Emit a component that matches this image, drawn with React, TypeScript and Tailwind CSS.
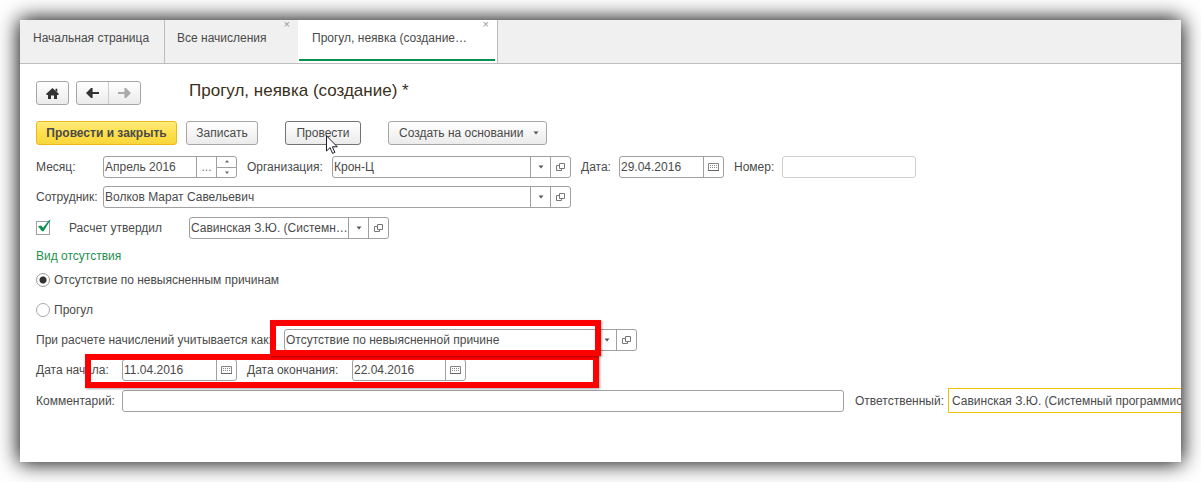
import type { ReactNode } from "react";

interface FieldProps {
  id: string;
  label: string;
  value?: string;
  className?: string;
  children?: ReactNode;
}

function Field({ id, label, value = "", className = "", children }: FieldProps) {
  return (
    <div className={`flex h-[22px] shrink-0 rounded-[3px] border bg-white ${className}`}>
      <input
        id={id}
        aria-label={label}
        defaultValue={value}
        className="min-w-0 flex-1 rounded-[3px] bg-transparent pl-px outline-none"
      />
      {children}
    </div>
  );
}

function FieldButton({ label, children }: { label: string; children: ReactNode }) {
  return (
    <button
      type="button"
      aria-label={label}
      className="flex w-5 shrink-0 items-center justify-center border-l border-[#a0a0a0] text-[#707070]"
    >
      {children}
    </button>
  );
}

function Caret() {
  return (
    <svg width="6" height="4" viewBox="0 0 6 4" fill="#555">
      <path d="M0.5 0.5h5L3 3.5z" />
    </svg>
  );
}

function OpenButton() {
  return (
    <FieldButton label="Открыть">
      <svg width="9" height="8" viewBox="0 0 9 8" fill="none" stroke="#777">
        <path d="M0.5 2.5h5v5h-5z" />
        <path d="M3.5 0.5h5v5h-5z" fill="#fff" />
      </svg>
    </FieldButton>
  );
}

function SelectButtons() {
  return (
    <>
      <FieldButton label="Выбрать из списка">
        <Caret />
      </FieldButton>
      <OpenButton />
    </>
  );
}

function CalendarButton() {
  return (
    <FieldButton label="Календарь">
      <svg width="11" height="8" viewBox="0 0 11 8" fill="none" stroke="#858585">
        <path d="M0.5 0.5h10v7h-10z" />
        <path d="M2 2.5h7M2 4.5h7" strokeDasharray="1 1" />
        <path d="M0 7.5h11" stroke="#666" />
      </svg>
    </FieldButton>
  );
}

function Arrow({ flip, color }: { flip?: boolean; color: string }) {
  return (
    <svg width="13" height="10" viewBox="0 0 13 10" fill={color} className={flip ? "rotate-180" : ""}>
      <path d="M0 5 5 0h1.6v3.9H13v2.2H6.6V10H5z" />
    </svg>
  );
}

function Cursor() {
  return (
    <svg
      width="13"
      height="20"
      viewBox="0 0 13 20"
      className="pointer-events-none absolute left-10 top-3.5 z-10"
    >
      <path d="M1.5 0.8V16l3.6-3.4 2.4 5.8 2.4-1-2.5-5.6h4.9z" fill="#fff" stroke="#1c1c28" />
    </svg>
  );
}

const plainButton =
  "h-6 rounded-[3px] border border-[#a6a6a6] bg-linear-to-b from-white to-[#ebebeb]";
const frame =
  "pointer-events-none absolute border-6 border-[#ff0000] shadow-[1px_1px_2px_rgba(0,0,0,0.35)]";

export default function App() {
  return (
    <div className="overflow-hidden bg-white p-5 font-['Liberation_Sans',Arial,sans-serif] text-xs text-[#4a4a4a]">
      <div className="bg-white shadow-[0_0_20px_1px_#000]">
        <nav className="flex h-11 border-b border-[#bdbdbd] bg-[#f0f0f0] leading-9">
          <a href="#home" className="w-[145px] border-r border-[#bdbdbd] pl-[13px]">
            Начальная страница
          </a>
          <div className="relative w-[133px] pl-3">
            <a href="#accruals">Все начисления</a>
            <button type="button" aria-label="Закрыть" className="absolute right-2 top-0 text-[11px] leading-2 text-[#999]">
              ×
            </button>
          </div>
          <div className="relative w-[200px] border-r border-[#bdbdbd] bg-white pl-3.5">
            <a href="#absence">Прогул, неявка (создание…</a>
            <button type="button" aria-label="Закрыть" className="absolute right-2 top-0 text-[11px] leading-2 text-[#999]">
              ×
            </button>
            <span className="absolute left-px right-0.5 bottom-0.5 h-0.5 bg-[#079150]" />
          </div>
        </nav>

        <form className="overflow-hidden pb-[49px] pl-4 pt-[17px]" onSubmit={(e) => e.preventDefault()}>
          <div className="flex h-6 items-center">
            <button type="button" aria-label="Домой" className={`${plainButton} flex w-[33px] items-center justify-center`}>
              <svg width="13" height="11" viewBox="0 0 13 11" fill="#333">
                <path d="M6.5 0 13 6 12.2 7H11v4H8V7.5H5V11H2V7H0.8L0 6zM9.5 0.8h1.8V4L9.5 2.4z" />
              </svg>
            </button>
            <div className={`${plainButton} ml-[7px] flex w-[65px]`}>
              <button type="button" aria-label="Назад" className="flex flex-1 items-center justify-center border-r border-[#ccc]">
                <Arrow color="#333" />
              </button>
              <button type="button" aria-label="Вперед" className="flex flex-1 items-center justify-center">
                <Arrow flip color="#aaa" />
              </button>
            </div>
            <h1 className="ml-12 pb-1 text-[17px] leading-5 text-[#3a3020]">Прогул, неявка (создание) *</h1>
          </div>

          <div className="mt-4 flex">
            <button
              type="submit"
              className="h-6 w-[141px] rounded-[3px] border border-[#f0b814] bg-linear-to-b from-[#ffeb7c] via-[#ffe04b] to-[#f8d63c] font-bold"
            >
              Провести и закрыть
            </button>
            <button type="button" className={`${plainButton} ml-[9px] w-[72px]`}>
              Записать
            </button>
            <div className="relative ml-[27px]">
              <button type="button" className="h-6 w-[76px] rounded-[3px] border border-[#737373] bg-linear-to-b from-white to-[#ebebeb]">
                Провести
              </button>
              <Cursor />
            </div>
            <button type="button" className={`${plainButton} ml-[27px] flex w-[159px] items-center justify-between pl-2.5 pr-[7px]`}>
              Создать на основании
              <Caret />
            </button>
          </div>

          <div className="mt-[11px] flex items-center">
            <label htmlFor="month" className="w-[67px] shrink-0">Месяц:</label>
            <Field id="month" label="Месяц" value="Апрель 2016" className="w-[134px] border-[#a0a0a0]">
              <FieldButton label="Выбрать месяц">...</FieldButton>
              <div className="flex w-5 shrink-0 flex-col border-l border-[#a0a0a0]">
                <button type="button" aria-label="Следующий месяц" className="flex flex-1 items-center justify-center border-b border-[#a0a0a0]">
                  <svg width="4" height="3" viewBox="0 0 4 3" fill="#666"><path d="M0 2.5h4L2 0z" /></svg>
                </button>
                <button type="button" aria-label="Предыдущий месяц" className="flex flex-1 items-center justify-center">
                  <svg width="4" height="3" viewBox="0 0 4 3" fill="#666"><path d="M0 0.5h4L2 3z" /></svg>
                </button>
              </div>
            </Field>
            <label htmlFor="org" className="ml-2.5 w-[85px] shrink-0">Организация:</label>
            <Field id="org" label="Организация" value="Крон-Ц" className="w-[239px] border-[#a0a0a0]">
              <SelectButtons />
            </Field>
            <label htmlFor="date" className="ml-2.5 w-[38px] shrink-0">Дата:</label>
            <Field id="date" label="Дата" value="29.04.2016" className="w-[105px] border-[#a0a0a0]">
              <CalendarButton />
            </Field>
            <label htmlFor="number" className="ml-2.5 w-12 shrink-0">Номер:</label>
            <Field id="number" label="Номер" className="w-[134px] border-[#cfcfcf]" />
          </div>

          <div className="mt-2 flex items-center">
            <label htmlFor="employee" className="w-[67px] shrink-0">Сотрудник:</label>
            <Field id="employee" label="Сотрудник" value="Волков Марат Савельевич" className="w-[468px] border-[#a0a0a0]">
              <SelectButtons />
            </Field>
          </div>

          <div className="mt-[9px] flex items-center">
            <span className="relative h-3.5 w-[33px]">
              <input
                id="approved"
                type="checkbox"
                defaultChecked
                className="block size-3.5 appearance-none border border-[#a0a0a0] bg-white"
              />
              <svg width="14" height="14" viewBox="0 0 14 14" className="pointer-events-none absolute left-px top-[-2px]">
                <path d="M1 7.2 4.2 6.6 6 8.8 12 1.2 13.8 0.6 6.6 12.2H5z" fill="#079150" />
              </svg>
            </span>
            <label htmlFor="approved" className="w-[120px]">Расчет утвердил</label>
            <Field id="approver" label="Расчет утвердил" value="Савинская З.Ю. (Системн…" className="w-[200px] border-[#a0a0a0]">
              <SelectButtons />
            </Field>
          </div>

          <fieldset className="mt-[9px] leading-4">
            <legend className="text-[#1f8f50]">Вид отсутствия</legend>
            <label className="mt-2 flex w-fit items-center gap-1">
              <input
                type="radio"
                name="kind"
                defaultChecked
                className="size-3.5 appearance-none rounded-full border border-[#999] bg-white bg-radial from-[#333] from-[3px] to-white to-[4px]"
              />
              Отсутствие по невыясненным причинам
            </label>
            <label className="mt-3.5 flex w-fit items-center gap-1">
              <input type="radio" name="kind" className="size-3.5 appearance-none rounded-full border border-[#aaa] bg-white" />
              Прогул
            </label>
          </fieldset>

          <div className="mt-[11px] flex items-center">
            <label htmlFor="reason" className="w-[248px] shrink-0">При расчете начислений учитывается как:</label>
            <div className="relative z-20">
              <Field id="reason" label="Учитывается как" value="Отсутствие по невыясненной причине" className="w-[353px] border-[#a0a0a0]">
                <SelectButtons />
              </Field>
              <span className={`${frame} -left-3.5 -top-[9px] h-9 w-[331px]`} />
            </div>
          </div>

          <div className="relative z-10 mt-2 flex items-center">
            <label htmlFor="start" className="w-[86px] shrink-0">Дата начала:</label>
            <Field id="start" label="Дата начала" value="11.04.2016" className="w-[115px] border-[#a0a0a0]">
              <CalendarButton />
            </Field>
            <label htmlFor="end" className="ml-2.5 w-[105px] shrink-0">Дата окончания:</label>
            <Field id="end" label="Дата окончания" value="22.04.2016" className="w-[114px] border-[#a0a0a0]">
              <CalendarButton />
            </Field>
            <span className={`${frame} -top-[5px] left-[49px] h-[34px] w-[514px]`} />
          </div>

          <div className="mt-[7px] flex items-center">
            <label htmlFor="comment" className="w-[86px] shrink-0">Комментарий:</label>
            <Field id="comment" label="Комментарий" className="flex-1 border-[#a0a0a0]" />
            <label htmlFor="responsible" className="ml-[11px] w-[93px] shrink-0">Ответственный:</label>
            <input
              id="responsible"
              defaultValue="Савинская З.Ю. (Системный программист)"
              className="h-[25px] w-[233px] border border-r-0 border-[#f5c000] bg-white pl-[3px] outline-none"
            />
          </div>
        </form>
      </div>
    </div>
  );
}
